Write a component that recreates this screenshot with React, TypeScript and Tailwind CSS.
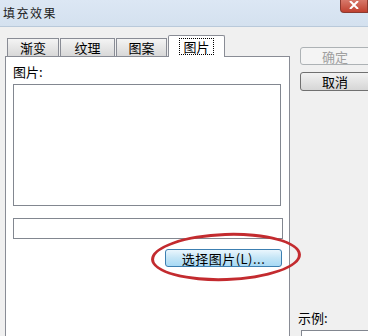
import React from "react";

const font = { fontFamily: '"Noto Sans CJK SC", "Liberation Sans", sans-serif' };

type TabProps = { label: string; active?: boolean; width: string };

function Tab({ label, active, width }: TabProps) {
  if (active) {
    return (
      <div
        className={`${width} h-[22px] -mb-px z-10 flex items-center justify-center bg-white border border-b-0 border-[#898c95] rounded-t-[2px]`}
      >
        <span className="px-[3px] leading-[15px] border border-dotted border-black text-[13px] text-black">
          {label}
        </span>
      </div>
    );
  }
  return (
    <div
      className={`${width} h-[18px] flex items-center justify-center border border-b-0 border-[#898c95] bg-gradient-to-b from-[#f4f4f4] to-[#d8d8d8] text-[13px] text-black leading-none`}
    >
      {label}
    </div>
  );
}

export default function App() {
  return (
    <div
      className="w-[368px] h-[336px] overflow-hidden bg-[#f0f0f0] flex flex-col text-black"
      style={font}
    >
      {/* title bar */}
      <div className="h-[27px] shrink-0 flex items-start justify-between bg-gradient-to-b from-[#dce7f4] to-[#d4e1ef] border-b border-[#b9c9da]">
        <span className="pl-[3px] pt-[4px] text-[12px] tracking-[1.5px] text-[#222]">填充效果</span>
        <div className="w-[28px] h-[13px] rounded-bl-[4px] bg-gradient-to-b from-[#d7786a] to-[#c0402f] border border-t-0 border-[#8b3a30] flex items-start justify-center">
          <svg width="10" height="8" viewBox="0 0 10 8" className="mt-[1px]">
            <path d="M1 0 L9 8 M9 0 L1 8" stroke="white" strokeWidth="2" />
          </svg>
        </div>
      </div>

      <div className="flex flex-1 min-h-0 pt-[9px]">
        {/* left: tab control */}
        <div className="ml-[5px] w-[285px] flex flex-col">
          <div className="flex items-end pl-[2px] h-[20px] gap-px">
            <Tab label="渐变" width="w-[52px]" />
            <Tab label="纹理" width="w-[55px]" />
            <Tab label="图案" width="w-[51px]" />
            <Tab label="图片" width="w-[57px]" active />
          </div>
          <div className="flex-1 bg-white border border-b-0 border-[#898c95] pl-[7px] pr-[6px] pt-[6px] flex flex-col">
            <span className="text-[13px] leading-[17px]">图片:</span>
            <div className="mt-[4px] h-[122px] w-[268px] border border-[#828790]" />
            <div className="mt-[12px] h-[21px] w-[270px] border border-[#828790]" />
            <div className="relative mt-[10px] self-end mr-[1px] w-[117px] h-[18px]">
              <div className="absolute -left-[14px] -top-[16px] w-[150px] h-[48px] rounded-[50%] border-[3px] border-[#c32b2f] rotate-[-2deg]" />
              <div className="w-full h-full rounded-[3px] border border-[#3c7fb1] bg-gradient-to-b from-[#eaf6fd] via-[#c4e5f6] to-[#a7d9f5] flex items-center justify-center text-[13px] leading-none tracking-[0.5px]">
                选择图片(L)...
              </div>
            </div>
          </div>
        </div>

        {/* right column */}
        <div className="flex-1 flex flex-col pl-[10px] pt-[11px]">
          <div className="h-[18px] w-[80px] rounded-[3px] border border-[#adb2b5] bg-[#f4f4f4] flex items-center justify-center text-[13px] text-[#a0a0a0] leading-none pr-[10px]">
            确定
          </div>
          <div className="mt-[7px] h-[19px] w-[80px] rounded-[3px] border border-[#707070] bg-gradient-to-b from-[#f2f2f2] to-[#d6d6d6] flex items-center justify-center text-[13px] leading-none pr-[10px]">
            取消
          </div>
          <div className="flex-1" />
          <span className="-ml-[2px] text-[13px] leading-[17px]">示例:</span>
          <div className="mt-[4px] ml-[1px] h-[6px] border border-b-0 border-[#828790] bg-white" />
        </div>
      </div>
    </div>
  );
}
